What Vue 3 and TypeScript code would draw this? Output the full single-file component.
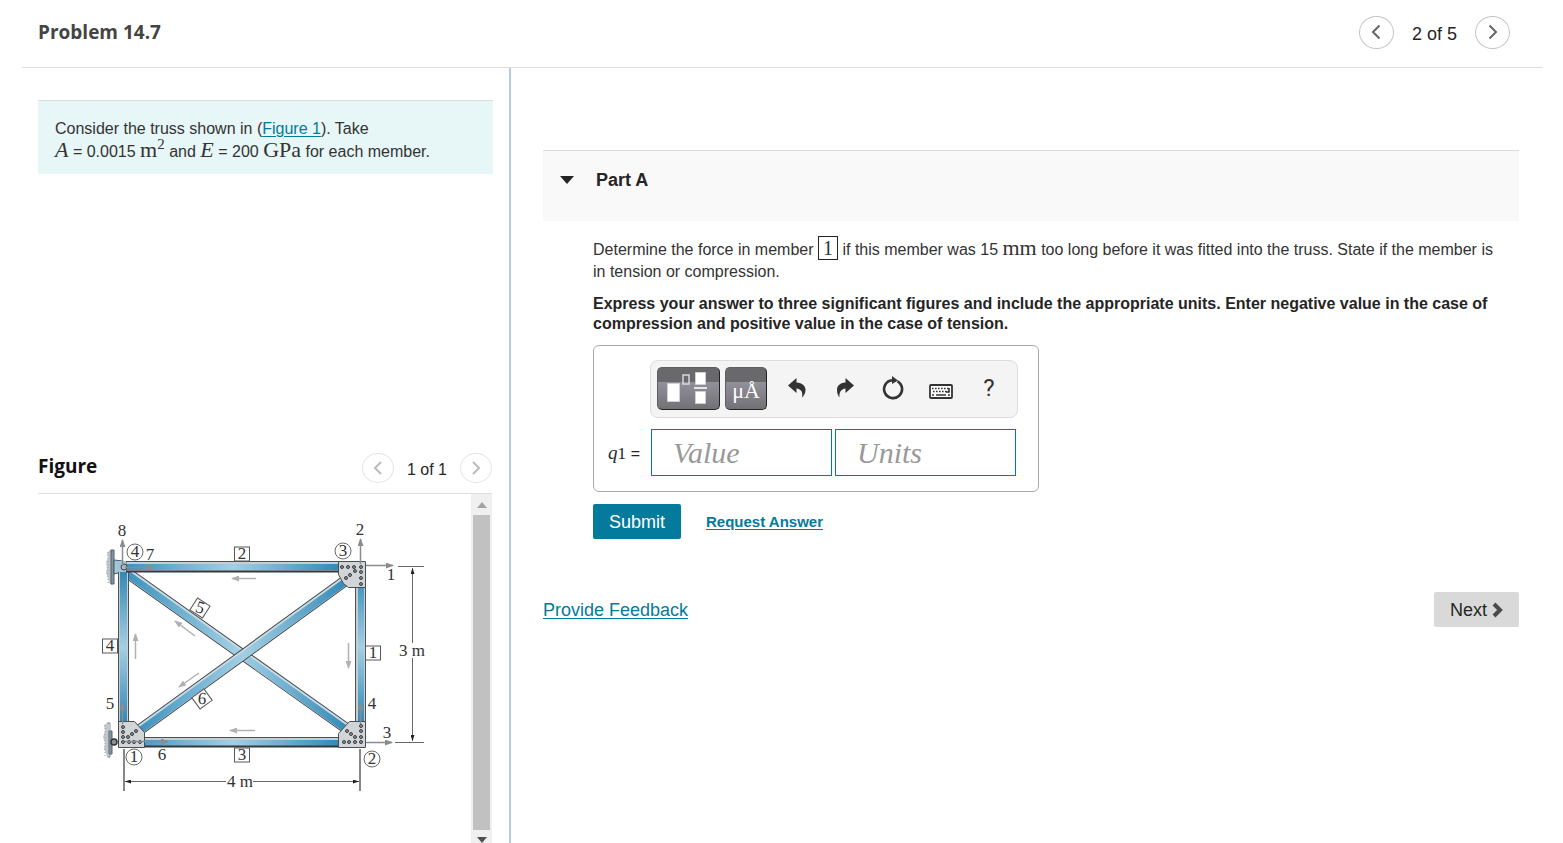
<script setup lang="ts">
import { ref } from 'vue'

interface Point { x: number; y: number }
interface Mark extends Point { text: string; angle?: number; textAngle?: number }

const value = ref('')
const units = ref('')
const expanded = ref(true)

const memberTags: Mark[] = [
  { x: 242, y: 554, text: '2' },
  { x: 110, y: 646, text: '4' },
  { x: 373, y: 653, text: '1' },
  { x: 242, y: 755, text: '3' },
  { x: 200, y: 608, text: '5', angle: 33, textAngle: -15 },
  { x: 202, y: 699, text: '6', angle: -36, textAngle: 40 },
]
const joints: Mark[] = [
  { x: 135, y: 552, text: '4' },
  { x: 343, y: 551, text: '3' },
  { x: 134, y: 757, text: '1' },
  { x: 372, y: 759, text: '2' },
]
const codes: Mark[] = [
  { x: 122, y: 536, text: '8' },
  { x: 150, y: 560, text: '7' },
  { x: 360, y: 535, text: '2' },
  { x: 391, y: 580, text: '1' },
  { x: 110, y: 709, text: '5' },
  { x: 162, y: 760, text: '6' },
  { x: 372, y: 709, text: '4' },
  { x: 387, y: 738, text: '3' },
]
const rivets: Point[] = [
  { x: 342, y: 567 }, { x: 348, y: 567 }, { x: 354, y: 567 }, { x: 361, y: 567 },
  { x: 361, y: 572 }, { x: 361, y: 578 }, { x: 361, y: 584 },
  { x: 346, y: 578 }, { x: 350, y: 575 }, { x: 355, y: 571 },
  { x: 123, y: 727 }, { x: 123, y: 732 }, { x: 123, y: 737 }, { x: 123, y: 742 },
  { x: 129, y: 742 }, { x: 134, y: 742 }, { x: 140, y: 742 },
  { x: 128, y: 737 }, { x: 132, y: 734 }, { x: 136, y: 731 },
  { x: 361, y: 726 }, { x: 361, y: 731 }, { x: 361, y: 737 }, { x: 361, y: 742 },
  { x: 344, y: 742 }, { x: 349, y: 742 }, { x: 355, y: 742 },
  { x: 347, y: 731 }, { x: 351, y: 734 }, { x: 355, y: 737 },
]
</script>

<template>
  <div class="page">
    <header class="topbar">
      <h1>Problem 14.7</h1>
      <nav class="pager" aria-label="Problems">
        <button type="button" class="round" aria-label="Previous problem">
          <svg width="12" height="16" viewBox="0 0 12 16"><path d="M9.500 1.500 3 8l6.500 6.500" /></svg>
        </button>
        <span>2 of 5</span>
        <button type="button" class="round" aria-label="Next problem">
          <svg width="12" height="16" viewBox="0 0 12 16"><path d="M2.500 1.500 9 8l-6.500 6.500" /></svg>
        </button>
      </nav>
    </header>

    <div class="workspace">
      <aside class="side">
        <section class="intro">
          <p class="info">
            Consider the truss shown in (<a href="#figure">Figure 1</a>). Take<br>
            <i class="math">A</i> = 0.0015 <span class="math">m<sup>2</sup></span> and <i class="math">E</i> = 200 <span class="math">GPa</span> for each member.
          </p>
        </section>
        <section id="figure" class="figure">
          <div class="figure-head">
            <h2>Figure</h2>
            <nav class="pager small" aria-label="Figures">
              <button type="button" class="round" aria-label="Previous figure">
                <svg width="12" height="16" viewBox="0 0 12 16"><path d="M9 2 3 8l6 6" /></svg>
              </button>
              <span>1 of 1</span>
              <button type="button" class="round" aria-label="Next figure">
                <svg width="12" height="16" viewBox="0 0 12 16"><path d="m3 2 6 6-6 6" /></svg>
              </button>
            </nav>
          </div>
          <div class="viewer">
            <div class="canvas">
              <svg class="truss" width="350" height="300" viewBox="90 510 350 300" role="img" aria-label="Truss, 4 m wide and 3 m high">
                <defs>
                  <linearGradient id="beamH" x1="0" y1="0" x2="1" y2="0">
                    <stop offset="0" stop-color="#3d92be" /><stop offset=".5" stop-color="#a3cfe4" /><stop offset="1" stop-color="#3289b7" />
                  </linearGradient>
                  <linearGradient id="beamV" x1="0" y1="0" x2="0" y2="1">
                    <stop offset="0" stop-color="#3289b7" /><stop offset=".5" stop-color="#a3cfe4" /><stop offset="1" stop-color="#3289b7" />
                  </linearGradient>
                  <marker id="tipGray" viewBox="0 0 8 6" refX="7" refY="3" markerWidth="8" markerHeight="6" markerUnits="userSpaceOnUse" orient="auto">
                    <path d="M0 0 8 3 0 6z" fill="#8b8c90" />
                  </marker>
                  <marker id="tipLight" viewBox="0 0 8 6" refX="7" refY="3" markerWidth="8" markerHeight="6" markerUnits="userSpaceOnUse" orient="auto">
                    <path d="M0 0 8 3 0 6z" fill="#b0b1b4" />
                  </marker>
                  <marker id="tipDark" viewBox="0 0 6 4" refX="6" refY="2" markerWidth="6" markerHeight="4" markerUnits="userSpaceOnUse" orient="auto">
                    <path d="M0 0 6 2 0 4z" fill="#222" />
                  </marker>
                </defs>

                <!-- wall supports -->
                <g fill="#c3c7ca">
                  <path d="M111 549l-4 4 1 5-2 4 1 6-1 5 2 5 1 5 3 2z" /><path d="M109 722l-5 3 1 6-2 6 2 6-1 6 3 7 3 2z" />
                </g>
                <g stroke="#9ea3a7" stroke-width="1" stroke-dasharray="1 2"><path d="M108 552v32M105 725v31" /></g>
                <path d="M111 550h3v34h-3zM109 731h3v23h-3z" fill="#7d97a5" stroke="#555f66" stroke-width="1" />
                <path d="M114 560l9 1 5 4-1 6-5 1-8 2z" fill="#a5c9da" stroke="#4e5960" />
                <path d="M107 723h3v34h-3" fill="none" stroke="#8b9297" />
                <circle cx="114" cy="742" r="3" fill="#8d9295" stroke="#333" stroke-width="1.500" />

                <!-- diagonals -->
                <g fill="none">
                  <path d="M126 572 350 731" stroke="#44494d" stroke-width="11" />
                  <path d="M126 572 350 731" stroke="#c9dce4" stroke-width="9" />
                  <path d="M126 573 350 732" stroke="url(#beamH)" stroke-width="7" />
                  <path d="M138 731 349 578" stroke="#44494d" stroke-width="11" />
                  <path d="M138 731 349 578" stroke="#c9dce4" stroke-width="9" />
                  <path d="M138 732 349 579" stroke="url(#beamH)" stroke-width="7" />
                </g>

                <!-- outer members -->
                <g fill="#c4cfd4" stroke="#4d5154">
                  <path d="M118.500 571.500h10v152h-10zM355.500 587.500h10v136h-10zM126 561.500h214v10H126zM144 737.500h196v9H144z" />
                </g>
                <path d="M120 572h7v150h-7zM358 588h6v134h-6z" fill="url(#beamV)" />
                <path d="M127 564h212v6H127zM145 740h194v6H145z" fill="url(#beamH)" />
                <path d="M126 571.500h214M144 746.500h196" stroke="#34393c" stroke-width="2" />
                <path d="M117 561h9v11h-9z" fill="#9fc5d6" />
                <circle cx="124" cy="567" r="3" fill="#aeb6ba" stroke="#42484b" />

                <!-- gusset plates -->
                <g fill="#d2d5d8" stroke="#4b4e50">
                  <path d="M338.500 561.500h27v26h-17l-5-4-5-9z" />
                  <path d="M118.500 721.500h16l10 11v15h-26z" />
                  <path d="M365.500 747.500h-27v-14l11-12h16z" />
                </g>
                <circle v-for="(r, i) in rivets" :key="i" :cx="r.x" :cy="r.y" r="1.500" fill="#8d9194" stroke="#3c3f41" stroke-width="1" />

                <!-- degrees of freedom -->
                <g stroke="#8b8c90" stroke-width="1.500">
                  <path d="M122.500 566V540" marker-end="url(#tipGray)" /><path d="M125 567.500h29" marker-end="url(#tipGray)" />
                  <path d="M360.500 564V539" marker-end="url(#tipGray)" /><path d="M366 565.500h27" marker-end="url(#tipGray)" />
                  <path d="M122.500 724V703" marker-end="url(#tipGray)" /><path d="M125 741.500h43" marker-end="url(#tipGray)" />
                  <path d="M360.500 724V703" marker-end="url(#tipGray)" /><path d="M366 742.500h26" marker-end="url(#tipGray)" />
                </g>
                <g stroke="#b0b1b4" stroke-width="1.500">
                  <path d="M256 578.500h-24" marker-end="url(#tipLight)" /><path d="M255 730.500h-25" marker-end="url(#tipLight)" />
                  <path d="M135.500 659V634" marker-end="url(#tipLight)" /><path d="M348.500 643v25" marker-end="url(#tipLight)" />
                  <path d="M195 636l-20-15" marker-end="url(#tipLight)" /><path d="M199 673l-20 14" marker-end="url(#tipLight)" />
                </g>

                <!-- dimensions -->
                <g stroke="#66686b" stroke-width="1">
                  <path d="M398 566.500h26M395 742.500h29" />
                  <path d="M124 749v42M360 749v42" stroke="#85878a" stroke-width="2" />
                  <path d="M412.500 643V568" marker-end="url(#tipDark)" /><path d="M412.500 658v83" marker-end="url(#tipDark)" />
                  <path d="M226 781.500H125" marker-end="url(#tipDark)" /><path d="M253 781.500h106" marker-end="url(#tipDark)" />
                </g>

                <g v-for="m in memberTags" :key="'m' + m.text" :transform="`translate(${m.x} ${m.y}) rotate(${m.angle ?? 0})`">
                  <rect x="-7.500" y="-7" width="15" height="14" fill="#fff" stroke="#55585a" />
                  <text y="5" :transform="`rotate(${m.textAngle ?? 0})`">{{ m.text }}</text>
                </g>
                <g v-for="j in joints" :key="'j' + j.text" :transform="`translate(${j.x} ${j.y})`">
                  <circle r="8" fill="#fff" stroke="#66696b" />
                  <text y="5">{{ j.text }}</text>
                </g>
                <text v-for="c in codes" :key="'c' + c.text" :x="c.x" :y="c.y">{{ c.text }}</text>
                <text x="412" y="656">3 m</text>
                <text x="240" y="787">4 m</text>
              </svg>
            </div>
            <div class="scrollbar" aria-hidden="true">
              <svg width="10" height="6" viewBox="0 0 10 6"><path d="M0 6 5 0l5 6z" fill="#a3a3a3" /></svg>
              <div class="thumb"></div>
              <svg width="10" height="6" viewBox="0 0 10 6"><path d="M0 0h10L5 6z" fill="#505050" /></svg>
            </div>
          </div>
        </section>
      </aside>

      <main class="main">
        <button type="button" class="part" :aria-expanded="expanded" @click="expanded = !expanded">
          <svg width="14" height="8" viewBox="0 0 14 8"><path d="M0 0h14L7 8z" fill="#252525" /></svg>
          Part A
        </button>
        <section v-if="expanded" class="question">
          <p class="prompt">
            Determine the force in member <span class="boxed">1</span> if this member was 15 <span class="math">mm</span> too long before it was fitted into the truss. State if the member is in tension or compression.
          </p>
          <p class="directions">
            Express your answer to three significant figures and include the appropriate units. Enter negative value in the case of compression and positive value in the case of tension.
          </p>
          <form class="answer" @submit.prevent>
            <div class="answer-box">
              <div class="tools" role="toolbar" aria-label="Answer tools">
                <button type="button" class="dark wide" aria-label="Templates">
                  <svg width="46" height="36" viewBox="0 0 46 36">
                    <g fill="#fff" stroke="#d0d0d4"><path d="M1.500 13.500h12v18h-12zM29.500 2.500h10v12h-10zM29.500 21.500h10v12h-10z" /></g>
                    <path d="M17 5h6v9h-6z" fill="none" stroke="#d8d8dc" stroke-width="1.500" /><path d="M28 18h13" stroke="#e4e4e8" stroke-width="2" />
                  </svg>
                </button>
                <button type="button" class="dark" aria-label="Units">μÅ</button>
                <button type="button" class="tool" aria-label="Undo">
                  <svg width="18" height="20" viewBox="0 0 18 20"><path d="M0 7.500 8.500 0v4.500C14.500 5 17.500 8 17.500 12c0 3-1.500 5.500-3.500 7.500C15 14.500 13.500 11 8.500 10.500V15z" fill="#333" /></svg>
                </button>
                <button type="button" class="tool" aria-label="Redo">
                  <svg width="18" height="20" viewBox="0 0 18 20"><path d="M18 7.500 9.500 0v4.500C3.500 5 1 8 1 12c0 3 1 5.500 2.500 7.500C3 14.500 5 11 9.500 10.500V15z" fill="#333" /></svg>
                </button>
                <button type="button" class="tool" aria-label="Reset">
                  <svg class="reset" width="22" height="24" viewBox="0 0 22 24"><path d="M15.500 5.300A9 9 0 1 1 10 4.200" fill="none" stroke="#333" stroke-width="2.600" /><path d="M10 0v8l6-3.500z" fill="#333" /></svg>
                </button>
                <button type="button" class="tool" aria-label="Keyboard shortcuts">
                  <svg class="keyboard" width="24" height="15" viewBox="0 0 24 15"><rect x="1" y="1" width="22" height="13" rx="1" fill="#fff" stroke="#333" stroke-width="1.800" /><path d="M3 4.500h17M4 7.500h16" stroke="#333" stroke-width="1.600" stroke-dasharray="1.600 1.400" /><path d="M3 11h2m2 0h10m2 0h2M20 4v4h-3" fill="none" stroke="#333" stroke-width="1.600" /></svg>
                </button>
                <button type="button" class="tool help" aria-label="Help">?</button>
              </div>
              <div class="fields">
                <label for="value"><i>q</i><span class="index">1</span> <span class="equals">=</span></label>
                <input id="value" v-model="value" type="text" placeholder="Value">
                <input v-model="units" type="text" placeholder="Units" aria-label="Units">
              </div>
            </div>
            <div class="actions">
              <button type="submit" class="submit">Submit</button>
              <a href="#answer">Request Answer</a>
            </div>
          </form>
        </section>
        <footer class="footer">
          <a href="#feedback">Provide Feedback</a>
          <button type="button" class="next">
            Next
            <svg width="11" height="16" viewBox="0 0 11 16"><path d="m2 2 6 6-6 6" fill="none" stroke="#4a4a4a" stroke-width="4" /></svg>
          </button>
        </footer>
      </main>
    </div>
  </div>
</template>

<style>
body {
  background: #fff;
}
</style>

<style scoped>
* {
  box-sizing: border-box;
}
h1, h2, p {
  margin: 0;
}
button {
  margin: 0;
  padding: 0;
  border: 0;
  background: none;
  color: inherit;
  font: inherit;
  cursor: pointer;
}
svg {
  display: block;
}
a {
  color: #047a9c;
  text-underline-offset: 2px;
}
.page {
  display: flex;
  flex-direction: column;
  height: 100vh;
  overflow: hidden;
  padding: 0 21px 0 22px;
  color: #333;
  font: 16px/22px "Liberation Sans", Arial, sans-serif;
}
.topbar {
  display: flex;
  justify-content: space-between;
  align-items: center;
  flex: none;
  height: 68px;
  padding: 0 32px 3px 16px;
  border-bottom: 1px solid #ddd;
}
h1, h2 {
  font: 700 19px/26px "Open Sans", "Noto Sans", sans-serif;
}
h1 {
  color: #444;
}
h2 {
  padding-bottom: 5px;
  color: #111;
}
.pager {
  display: flex;
  align-items: center;
  gap: 18px;
  color: #252525;
  font-size: 18px;
}
.pager span {
  padding-top: 4px;
}
.round {
  display: grid;
  place-items: center;
  width: 35px;
  height: 33px;
  border: 1px solid #c4c4c4;
  border-radius: 50%;
}
.round path {
  fill: none;
  stroke: #666;
  stroke-width: 2;
}
.small {
  gap: 13px;
  font-size: 16px;
}
.small .round {
  width: 32px;
  height: 30px;
  border-color: #e4e4e4;
}
.small path {
  stroke: #bbb;
}
.workspace {
  display: grid;
  grid-template-columns: 489fr 1031fr;
  flex: 1;
  min-height: 0;
}
.side {
  display: grid;
  grid-template-rows: 377fr 398fr;
  min-height: 0;
  border-right: 2px solid #b8cce0;
}
.intro {
  padding: 32px 16px 0;
}
.info {
  padding: 17px 17px 11px;
  border-top: 1px solid #ddd;
  background: #e7f6f7;
}
.math {
  font-family: "Liberation Serif", "Times New Roman", serif;
  font-size: 22px;
  line-height: 20px;
}
.math sup {
  font-size: 15px;
  line-height: 0;
}
.figure {
  display: flex;
  flex-direction: column;
  min-height: 0;
  padding: 0 17px 0 16px;
}
.figure-head {
  display: flex;
  justify-content: space-between;
  align-items: center;
  flex: none;
  height: 49px;
  padding-bottom: 2px;
  border-bottom: 1px solid #ddd;
}
.viewer {
  display: flex;
  flex: 1;
  min-height: 0;
}
.canvas {
  flex: 1;
  overflow: hidden;
  padding: 16px 0 0 52px;
}
.truss text {
  fill: #333;
  font: 17px "Liberation Serif", "Times New Roman", serif;
  text-anchor: middle;
}
.scrollbar {
  display: flex;
  flex-direction: column;
  align-items: center;
  gap: 7px;
  width: 21px;
  padding: 8px 2px 0;
  background: #f0f0f0;
}
.scrollbar svg {
  flex: none;
}
.thumb {
  flex: 1;
  align-self: stretch;
  background: #c1c1c1;
}
.main {
  padding: 82px 23px 0 32px;
}
.part {
  display: flex;
  align-items: center;
  gap: 22px;
  width: 100%;
  height: 71px;
  padding: 0 17px 12px;
  border-top: 1px solid #ddd;
  background: #f9f9f9;
  color: #252525;
  font-size: 18px;
  font-weight: 700;
}
.question {
  padding: 15px 0 0 50px;
}
.prompt {
  padding-right: 14px;
}
.boxed {
  display: inline-block;
  padding: 0 4px;
  border: 1px solid #252525;
  font: 20px/22px "Liberation Serif", "Times New Roman", serif;
}
.directions {
  margin-top: 11px;
  color: #252525;
  font-weight: 700;
  line-height: 20px;
}
.answer-box {
  width: 446px;
  margin-top: 11px;
  padding: 14px 20px 15px 14px;
  border: 1px solid #aaa;
  border-radius: 6px;
}
.tools {
  display: flex;
  align-items: center;
  height: 58px;
  margin-left: 42px;
  padding: 0 4px 2px 6px;
  border: 1px solid #ddd;
  border-radius: 8px;
  background: #f4f4f4;
}
.dark {
  display: grid;
  place-items: center;
  width: 42px;
  height: 43px;
  margin-right: 6px;
  border: 1px solid #5f5f63;
  border-right-color: #222;
  border-bottom-color: #222;
  border-radius: 5px;
  background: linear-gradient(#69696b 0 34%, #92919b 34%, #727176);
  color: #fff;
  font: 22px/38px "Liberation Serif", "Times New Roman", serif;
  padding-top: 4px;
}
.wide {
  width: 63px;
  margin-right: 5px;
  padding: 0;
}
.tool {
  display: grid;
  place-items: center;
  flex: 1;
  height: 43px;
}
.keyboard {
  margin-top: 7px;
}
.help {
  color: #333;
  font: 24px Roboto, "Liberation Sans", sans-serif;
}
.fields {
  display: flex;
  align-items: center;
  margin-top: 11px;
  padding-right: 2px;
}
.fields label {
  width: 43px;
  flex: none;
  color: #252525;
  font: 19px "Liberation Serif", "Times New Roman", serif;
}
.index {
  font-size: 17px;
}
.equals {
  font: 16px "Liberation Sans", Arial, sans-serif;
}
.fields input {
  flex: 1;
  min-width: 0;
  height: 47px;
  margin: 0;
  padding: 0 21px;
  border: 1px solid #047a9c;
  background: #fff;
  color: #333;
  font: 30px "Liberation Serif", "Times New Roman", serif;
}
.fields input + input {
  margin-left: 3px;
}
.fields input::placeholder {
  color: #999;
  font-style: italic;
  opacity: 1;
}
.actions {
  display: flex;
  align-items: center;
  gap: 25px;
  margin-top: 12px;
  font-size: 15px;
  font-weight: 700;
}
.submit {
  height: 35px;
  padding: 0 16px;
  border-radius: 2px;
  background: #047a9c;
  color: #fff;
  font-size: 18px;
  font-weight: 400;
}
.footer {
  display: flex;
  justify-content: space-between;
  align-items: center;
  margin-top: 53px;
  font-size: 18px;
}
.next {
  display: flex;
  align-items: center;
  gap: 5px;
  height: 35px;
  padding: 0 16px;
  border-radius: 2px;
  background: #d9d9d9;
  color: #252525;
}
</style>
